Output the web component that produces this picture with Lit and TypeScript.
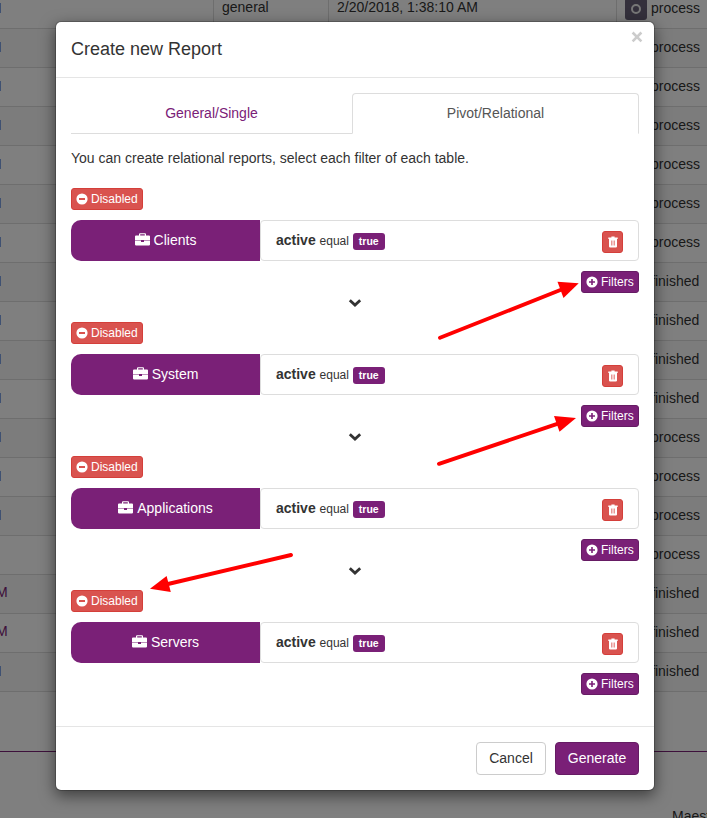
import { LitElement, html, css, svg } from "lit";
import { customElement, property } from "lit/decorators.js";

interface ReportTable {
  name: string;
  field: string;
  operator: string;
  value: string;
}

interface Row {
  link: "edge" | "M" | "";
  status: string;
}

const TABLES: ReportTable[] = ["Clients", "System", "Applications", "Servers"].map((name) => ({
  name,
  field: "active",
  operator: "equal",
  value: "true",
}));

const ROWS: Row[] = [
  ...Array.from({ length: 7 }, (): Row => ({ link: "edge", status: "process" })),
  ...Array.from({ length: 4 }, (): Row => ({ link: "edge", status: "finished" })),
  ...Array.from({ length: 3 }, (): Row => ({ link: "edge", status: "process" })),
  { link: "", status: "process" },
  { link: "M", status: "finished" },
  { link: "M", status: "finished" },
  { link: "edge", status: "finished" },
];

const minusSign = html`<svg class="sign" viewBox="0 0 12 12">
  <path fill="currentColor" fill-rule="evenodd" d="M6 .4a5.6 5.6 0 1 0 0 11.2A5.6 5.6 0 0 0 6 .4zM3 5.1h6v1.8H3z" />
</svg>`;

const plusSign = html`<svg class="sign" viewBox="0 0 12 12">
  <path
    fill="currentColor"
    fill-rule="evenodd"
    d="M6 .4a5.6 5.6 0 1 0 0 11.2A5.6 5.6 0 0 0 6 .4zM5.2 3h1.6v2.2H9v1.6H6.8V9H5.2V6.8H3V5.2h2.2z"
  />
</svg>`;

const trash = html`<svg class="trash-icon" viewBox="0 0 10 12">
  <path
    fill="currentColor"
    fill-rule="evenodd"
    d="M3.4 .4h3.2v1H9.7V3H.3V1.400h3.100zM1 3h8v7.600a.8.8 0 0 1-.8.8H1.800A.8.8 0 0 1 1 10.600zM3 4.400v5.200h.6V4.400zM4.700 4.400v5.200h.6V4.400zM6.400 4.400v5.200h.6V4.400z"
  />
</svg>`;

const briefcase = html`<svg class="briefcase" viewBox="0 0 15 13">
  <path
    fill="currentColor"
    fill-rule="evenodd"
    d="M5 .2h5a1 1 0 0 1 1 1V2.500h3a1 1 0 0 1 1 1V7H0V3.500a1 1 0 0 1 1-1H4V1.200a1 1 0 0 1 1-1zM5.200 1.300v1.200h4.600v-1.200zM0 7.600h6v1.300h3V7.600h6v4a.8.8 0 0 1-.8.8H.8a.8.8 0 0 1-.8-.8z"
  />
</svg>`;

const arrow = (x1: number, y1: number, x2: number, y2: number, head: string) => svg`
  <line x1=${x1} y1=${y1} x2=${x2} y2=${y2} stroke="#f00" stroke-width="3.9" stroke-linecap="round" />
  <polygon points=${head} fill="#f00" />`;

@customElement("orders-table")
class OrdersTable extends LitElement {
  static styles = css`
    :host {
      display: block;
      height: 818px;
      background: #fff;
      color: #333;
      overflow: hidden;
    }
    .row {
      display: grid;
      grid-template-columns: 213px 115px 288px 1fr;
      height: 39px;
      box-sizing: border-box;
      border-bottom: 1px solid #ddd;
    }
    .row:nth-child(even) {
      background: #f9f9f9;
    }
    .rows {
      margin-top: -10px;
    }
    .cell {
      box-sizing: border-box;
      height: 38px;
      padding: 7px 8px 0;
      border-left: 1px solid #ddd;
      white-space: nowrap;
      line-height: 20px;
    }
    .cell.link {
      border-left: 0;
      padding-left: 0;
    }
    .status {
      display: flex;
      gap: 4px;
      padding-top: 8px;
    }
    .mark {
      display: flex;
      align-items: center;
      justify-content: center;
      flex: none;
      width: 22px;
      height: 22px;
      border-radius: 3px;
      background: #686078;
    }
    .ring {
      width: 6px;
      height: 6px;
      border: 2.500px solid #eee;
      border-radius: 50%;
    }
    .edge {
      display: block;
      width: 1px;
      height: 10px;
      margin-top: 6px;
      background: #7fa2e4;
    }
    .initial {
      display: block;
      margin-left: -4px;
      color: #7a2077;
    }
    .footer {
      margin-top: 59px;
      border-top: 1px solid #7a2077;
      padding: 54px 0 0 672px;
      line-height: 20px;
      white-space: nowrap;
    }
  `;

  render() {
    return html`
      <div class="rows">
        ${ROWS.map(
          (row, i) => html`<div class="row">
            <div class="cell link">
              ${row.link === "edge" ? html`<span class="edge"></span>` : row.link ? html`<span class="initial">M</span>` : ""}
            </div>
            <div class="cell">${i === 0 ? "general" : ""}</div>
            <div class="cell">${i === 0 ? "2/20/2018, 1:38:10 AM" : ""}</div>
            <div class="cell status">
              <span class="mark"><span class="ring"></span></span>
              <span>${row.status}</span>
            </div>
          </div>`,
        )}
      </div>
      <div class="footer">Maestro</div>
    `;
  }
}

@customElement("report-filter")
class ReportFilter extends LitElement {
  @property({ attribute: false }) table!: ReportTable;

  static styles = css`
    :host {
      display: block;
      height: 105px;
    }
    button {
      font: inherit;
      margin: 0;
      box-sizing: border-box;
    }
    .small {
      display: flex;
      align-items: center;
      gap: 3px;
      height: 22px;
      padding: 0 5px 0 4px;
      border: 1px solid;
      border-radius: 3px;
      color: #fff;
      font-size: 12px;
      line-height: 18px;
    }
    .danger {
      background: #d9534f;
      border-color: #d43f3a;
    }
    .primary {
      background: #7a2077;
      border-color: #661b64;
    }
    .disabled {
      width: 72px;
    }
    .sign {
      width: 12px;
      height: 12px;
      flex: none;
    }
    .line {
      display: grid;
      grid-template-columns: 189px 1fr;
      height: 41px;
      margin: 10px 0;
    }
    .name {
      display: flex;
      align-items: center;
      justify-content: center;
      gap: 4px;
      box-sizing: border-box;
      padding-bottom: 1px;
      background: #7a2077;
      color: #fff;
      border-radius: 10px 0 0 10px;
      line-height: 20px;
    }
    .briefcase {
      width: 15px;
      height: 13px;
      margin-top: -1px;
    }
    .item {
      display: flex;
      align-items: center;
      box-sizing: border-box;
      border: 1px solid #ddd;
      border-radius: 4px;
      padding: 0 15px;
    }
    .rule {
      flex: 1;
      line-height: 20px;
    }
    .rule small {
      font-size: 12px;
    }
    .badge {
      display: inline-block;
      padding: 3px 6px;
      border-radius: 3px;
      background: #7a2077;
      color: #fff;
      font-size: 10.500px;
      font-weight: bold;
      line-height: 11px;
    }
    .trash {
      justify-content: center;
      width: 21px;
      padding: 0;
      margin-top: 3px;
    }
    .trash-icon {
      width: 10px;
      height: 12px;
    }
    .filters {
      width: 58px;
      margin-left: auto;
    }
  `;

  render() {
    const { name, field, operator, value } = this.table;
    return html`
      <button class="small danger disabled">${minusSign}<span>Disabled</span></button>
      <div class="line">
        <div class="name">${briefcase}<span>${name}</span></div>
        <div class="item">
          <div class="rule"><b>${field}</b> <small>${operator}</small> <span class="badge">${value}</span></div>
          <button class="small danger trash">${trash}</button>
        </div>
      </div>
      <button class="small primary filters">${plusSign}<span>Filters</span></button>
    `;
  }
}

@customElement("app-root")
class AppRoot extends LitElement {
  static styles = css`
    :host {
      display: block;
      position: relative;
      height: 818px;
      overflow: hidden;
      font-family: "Liberation Sans", Arial, sans-serif;
      font-size: 14px;
      line-height: 20px;
      color: #333;
    }
    .backdrop {
      position: absolute;
      inset: 0;
      background: rgba(0, 0, 0, 0.5);
    }
    .modal {
      position: absolute;
      top: 21px;
      left: 55px;
      box-sizing: border-box;
      width: 600px;
      height: 770px;
      display: flex;
      flex-direction: column;
      background: #fff;
      background-clip: padding-box;
      border: 1px solid rgba(0, 0, 0, 0.2);
      border-radius: 6px;
      box-shadow: 0 5px 15px rgba(0, 0, 0, 0.5);
    }
    .header {
      display: flex;
      justify-content: space-between;
      box-sizing: border-box;
      height: 56px;
      padding: 15px 11px 0 15px;
      border-bottom: 1px solid #e5e5e5;
    }
    .title {
      margin: 0;
      font-size: 18px;
      font-weight: 400;
      line-height: 25px;
    }
    .close {
      width: 12px;
      height: 12px;
      margin-top: -6px;
    }
    .body {
      flex: 1;
      padding: 15px 15px 0;
    }
    .tabs {
      display: grid;
      grid-template-columns: 281px 1fr;
      height: 41px;
      text-align: center;
    }
    .tab {
      box-sizing: border-box;
      padding-top: 10px;
      border-bottom: 1px solid #ddd;
      color: #7a2077;
    }
    .tab.active {
      padding-top: 9px;
      border: 1px solid #ddd;
      border-bottom-color: #fff;
      border-radius: 4px 4px 0 0;
      color: #555;
    }
    .hint {
      margin: 14px 0 20px;
    }
    .chevron {
      display: block;
      width: 14px;
      height: 9px;
      margin: 5px auto 15px;
    }
    .footer {
      display: flex;
      justify-content: flex-end;
      gap: 9px;
      box-sizing: border-box;
      height: 64px;
      padding: 15px;
      border-top: 1px solid #e5e5e5;
    }
    .button {
      box-sizing: border-box;
      height: 33px;
      padding: 0 0 2px;
      border: 1px solid #ccc;
      border-radius: 4px;
      background: #fff;
      color: #333;
      font: inherit;
    }
    .cancel {
      width: 70px;
    }
    .generate {
      width: 84px;
      background: #7a2077;
      border-color: #661b64;
      color: #fff;
    }
    .arrows {
      position: absolute;
      inset: 0;
      pointer-events: none;
    }
  `;

  render() {
    return html`
      <orders-table></orders-table>
      <div class="backdrop"></div>
      <div class="modal">
        <div class="header">
          <h4 class="title">Create new Report</h4>
          <svg class="close" viewBox="0 0 12 12">
            <path d="M1.600 1.500l8.800 8.800M10.400 1.500l-8.800 8.800" stroke="#ccc" stroke-width="2.600" />
          </svg>
        </div>
        <div class="body">
          <div class="tabs">
            <div class="tab">General/Single</div>
            <div class="tab active">Pivot/Relational</div>
          </div>
          <p class="hint">You can create relational reports, select each filter of each table.</p>
          ${TABLES.map(
            (table, i) => html`<report-filter .table=${table}></report-filter>
              ${i < TABLES.length - 1
                ? html`<svg class="chevron" viewBox="0 0 14 9">
                    <path d="M1.800 2.200L7 7l5.200-4.800" fill="none" stroke="#333" stroke-width="2.800" />
                  </svg>`
                : ""}`,
          )}
        </div>
        <div class="footer">
          <button class="button cancel">Cancel</button>
          <button class="button generate">Generate</button>
        </div>
      </div>
      <svg class="arrows" width="707" height="818">
        ${arrow(440, 337.7, 561, 289.8, "578.7,283.2 557.5,281.8 563.5,298")}
        ${arrow(439, 463.8, 558, 423.7, "576,418 554,416 559.5,431.8")}
        ${arrow(291, 555, 168, 584, "150,588.8 166.6,576 170.8,592")}
      </svg>
    `;
  }
}
